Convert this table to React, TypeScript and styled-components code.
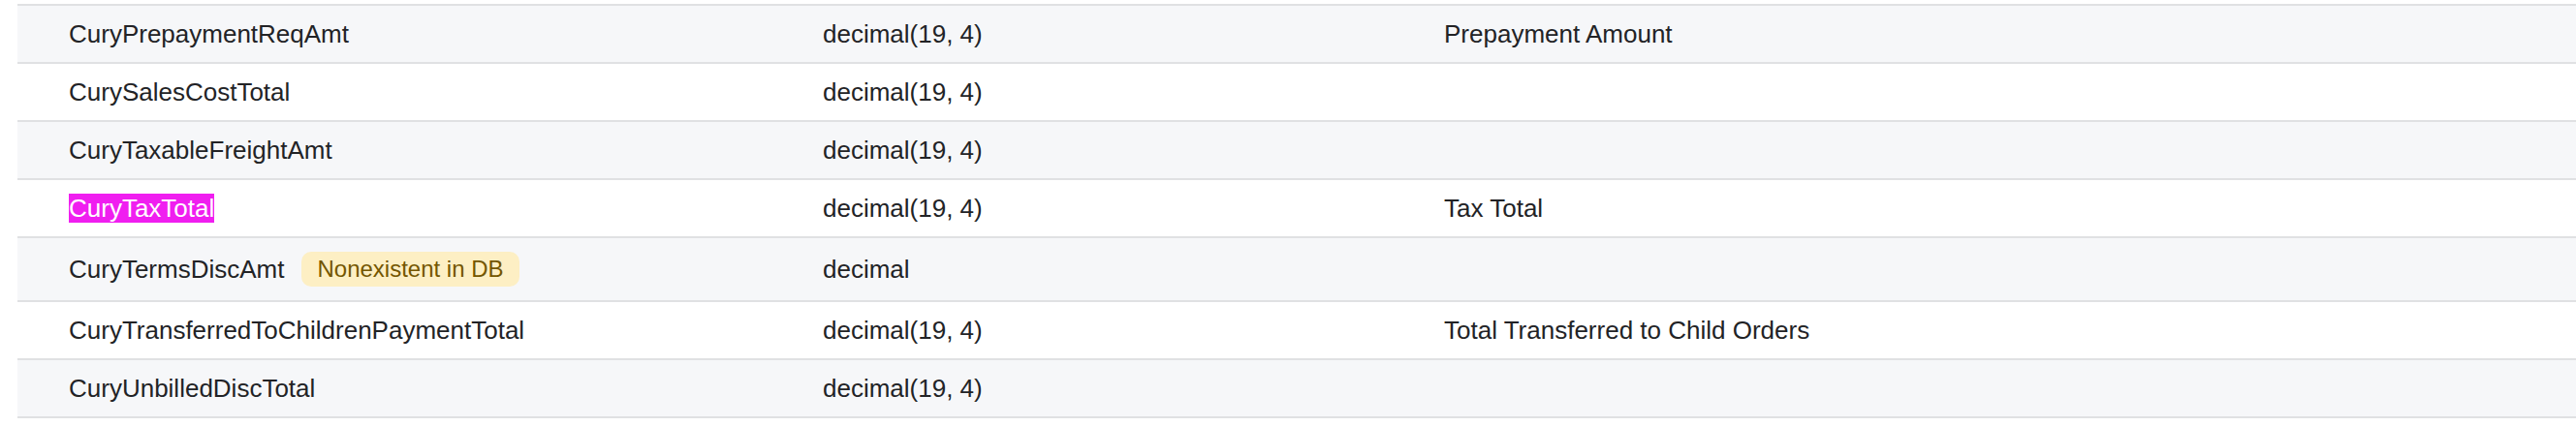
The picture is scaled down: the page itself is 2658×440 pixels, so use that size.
import { createGlobalStyle, styled } from "styled-components";

const GlobalStyle = createGlobalStyle`
  html, body {
    margin: 0;
    padding: 0;
    background: #ffffff;
  }
  body {
    font-family: "Liberation Sans", Arial, Helvetica, sans-serif;
    color: #222326;
  }
`;

const Page = styled.div`
  padding: 4px 0 0 18px;
`;

const Table = styled.div`
  display: flex;
  flex-direction: column;
  border-top: 2px solid #e0e1e3;
`;

const Row = styled.div<{ $striped: boolean }>`
  display: grid;
  grid-template-columns: 778px 641px 1fr;
  background: ${(p) => (p.$striped ? "#f6f7f9" : "#ffffff")};
  border-bottom: 2px solid #e0e1e3;
`;

const Cell = styled.div`
  display: flex;
  align-items: center;
  gap: 18px;
  min-height: 30px;
  padding: 14px 0 14px 53px;
  font-size: 26px;
  line-height: 30px;
  white-space: nowrap;
`;

const Highlight = styled.mark`
  background: #f01ef0;
  color: #ffffff;
`;

const Badge = styled.span`
  display: inline-block;
  height: 36px;
  line-height: 36px;
  padding: 0 16px;
  border-radius: 10px;
  background: #fdefc4;
  color: #745600;
  font-size: 24px;
`;

interface Field {
  name: string;
  type: string;
  description?: string;
  missing?: boolean;
  highlighted?: boolean;
}

const fields: Field[] = [
  { name: "CuryPrepaymentReqAmt", type: "decimal(19, 4)", description: "Prepayment Amount" },
  { name: "CurySalesCostTotal", type: "decimal(19, 4)" },
  { name: "CuryTaxableFreightAmt", type: "decimal(19, 4)" },
  { name: "CuryTaxTotal", type: "decimal(19, 4)", description: "Tax Total", highlighted: true },
  { name: "CuryTermsDiscAmt", type: "decimal", missing: true },
  {
    name: "CuryTransferredToChildrenPaymentTotal",
    type: "decimal(19, 4)",
    description: "Total Transferred to Child Orders",
  },
  { name: "CuryUnbilledDiscTotal", type: "decimal(19, 4)" },
];

export default function App() {
  return (
    <>
      <GlobalStyle />
      <Page>
        <Table>
          {fields.map((f, i) => (
            <Row key={f.name} $striped={i % 2 === 0}>
              <Cell>
                {f.highlighted ? <Highlight>{f.name}</Highlight> : <span>{f.name}</span>}
                {f.missing && <Badge>Nonexistent in DB</Badge>}
              </Cell>
              <Cell>{f.type}</Cell>
              <Cell>{f.description}</Cell>
            </Row>
          ))}
        </Table>
      </Page>
    </>
  );
}
